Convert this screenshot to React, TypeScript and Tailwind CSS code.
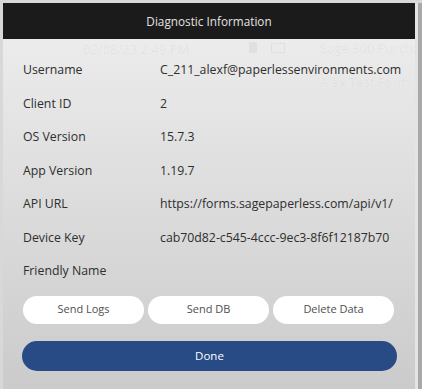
const rows = [
  { label: "Username", value: "C_211_alexf@paperlessenvironments.com" },
  { label: "Client ID", value: "2" },
  { label: "OS Version", value: "15.7.3" },
  { label: "App Version", value: "1.19.7" },
  { label: "API URL", value: "https://forms.sagepaperless.com/api/v1/" },
  { label: "Device Key", value: "cab70d82-c545-4ccc-9ec3-8f6f12187b70" },
  { label: "Friendly Name", value: "" },
];

const font = { fontFamily: '"Open Sans", "Noto Sans", sans-serif' };

export default function App() {
  return (
    <div
      className="relative w-[422px] h-[389px] overflow-hidden bg-[#d8d8d8] pt-[3px] pl-[3px] flex"
      style={font}
    >
      {/* dialog */}
      <div className="w-[412px] h-[386px] flex flex-col bg-gradient-to-b from-[#eeefee] to-[#cbcbcb]">
        <div className="h-[36px] shrink-0 bg-[#1b1b1b] flex items-center justify-center text-[11.75px] text-[#e2e2e2] pt-[2px]">
          Diagnostic Information
        </div>

        <div className="flex flex-col pt-[22px] pl-[20px]">
          {rows.map((r) => (
            <div key={r.label} className="flex h-[33.5px] items-start text-[12.3px] text-[#2e2e2e]">
              <span className="w-[137px] shrink-0">{r.label}</span>
              <span className="whitespace-nowrap">{r.value}</span>
            </div>
          ))}
        </div>

        <div className="flex gap-[4px] pl-[20px]">
          {["Send Logs", "Send DB", "Delete Data"].map((b) => (
            <button
              key={b}
              className="w-[121px] h-[28px] rounded-full bg-white text-[11px] text-[#4f4f4f] flex items-center justify-center"
            >
              {b}
            </button>
          ))}
        </div>

        <div className="pl-[19px] mt-[17px]">
          <button className="w-[375px] h-[30px] rounded-full bg-[#284a85] text-[11.5px] text-white flex items-center justify-center">
            Done
          </button>
        </div>
      </div>

      {/* strip of the screen behind */}
      <div className="flex-1 flex">
        <div className="w-[3px] bg-[#e4e4e4]" />
        <div className="flex-1 bg-[#a9a9a9]" />
      </div>

      {/* faint content showing through the dialog */}
      <div className="absolute left-[83px] top-[40px] text-[13px] text-black/[0.045] pointer-events-none">
        02/08/23 2:49 PM
      </div>
      <div className="absolute left-[249px] top-[42px] w-[8px] h-[11px] bg-black/[0.045] pointer-events-none" />
      <div className="absolute left-[271px] top-[43px] w-[14px] h-[10px] border border-black/[0.045] pointer-events-none" />
      <div className="absolute left-[320px] top-[39px] w-[96px] overflow-hidden text-[13px] text-black/[0.045] whitespace-nowrap pointer-events-none">
        Sage 300 Purchas
      </div>
      <div className="absolute left-[320px] top-[73px] text-[13px] text-black/[0.04] whitespace-nowrap pointer-events-none">
        Alex Test Form
      </div>
    </div>
  );
}
